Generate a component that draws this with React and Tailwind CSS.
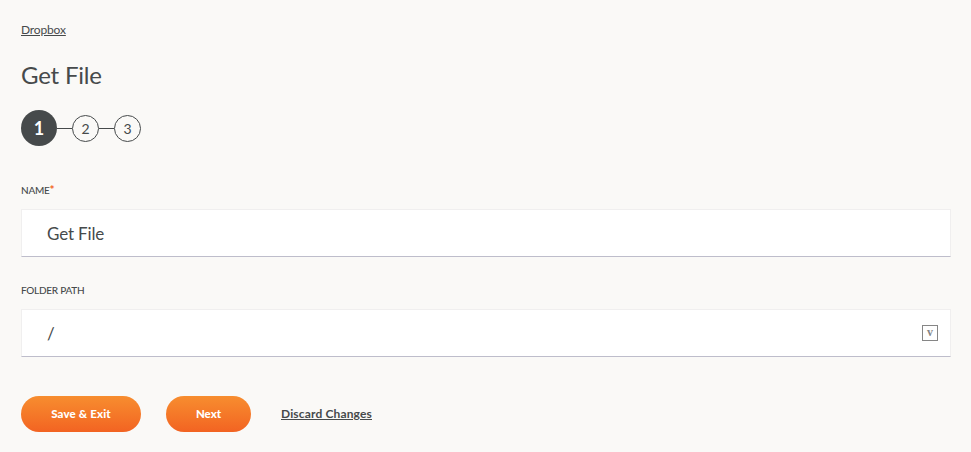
function Step({ n }) {
  return (
    <>
      <div className="h-px w-[15px] bg-[#464a4b]" />
      <div className="flex h-[27px] w-[27px] items-center justify-center rounded-full border border-[#464a4b] pt-px text-[14px] leading-none">
        {n}
      </div>
    </>
  );
}

function Field({ label, required, value, children }) {
  return (
    <div className="flex flex-col">
      <label className="flex h-[26px] text-[10px] leading-[14px] font-medium tracking-[-0.26px] whitespace-nowrap">
        {label}
        {required && <span className="text-[12px] leading-[14px] font-bold text-[#f26322]">*</span>}
      </label>
      <div className="flex h-12 items-center justify-between border border-[#f0efef] border-b-[#bebdcb] bg-white pr-3 pl-[25px]">
        <span className="text-[17px] leading-none tracking-[-0.15px]">{value}</span>
        {children}
      </div>
    </div>
  );
}

export default function App() {
  return (
    <main className="flex h-[452px] w-[971px] flex-col overflow-hidden bg-[#faf9f7] px-[21px] pr-5 font-['Lato','Open_Sans',sans-serif] text-[#464a4b]">
      <a className="mt-[22px] self-start text-[12px] leading-4 tracking-[-0.15px] underline underline-offset-1">
        Dropbox
      </a>
      <h1 className="mt-[22px] text-[24px] leading-[30px] tracking-[-0.2px]">Get File</h1>
      <div className="mt-5 flex h-9 items-center">
        <div className="flex h-9 w-9 items-center justify-center rounded-full bg-[#464a4b] text-[18px] leading-none font-bold text-white">
          1
        </div>
        <Step n={2} />
        <Step n={3} />
      </div>
      <div className="mt-[37px] flex flex-col gap-[26px]">
        <Field label="NAME" required value="Get File" />
        <Field label="FOLDER PATH" value="/">
          <span className="flex h-4 w-4 items-center justify-center border border-[#868686] pb-0.5 font-['Liberation_Serif',serif] text-[12px] leading-none font-bold text-[#858585]">
            v
          </span>
        </Field>
      </div>
      <div className="mt-[39px] flex h-9 items-center text-[11.5px]">
        <button className="h-9 w-[120px] rounded-full bg-linear-to-b from-[#f78d2f] to-[#f26322] font-black tracking-[0.15px] text-white">
          Save &amp; Exit
        </button>
        <button className="ml-[25px] h-9 w-[85px] rounded-full bg-linear-to-b from-[#f78d2f] to-[#f26322] font-black text-white">
          Next
        </button>
        <a className="ml-[30px] text-[12px] font-bold tracking-[0.15px] underline underline-offset-1">
          Discard Changes
        </a>
      </div>
    </main>
  );
}
